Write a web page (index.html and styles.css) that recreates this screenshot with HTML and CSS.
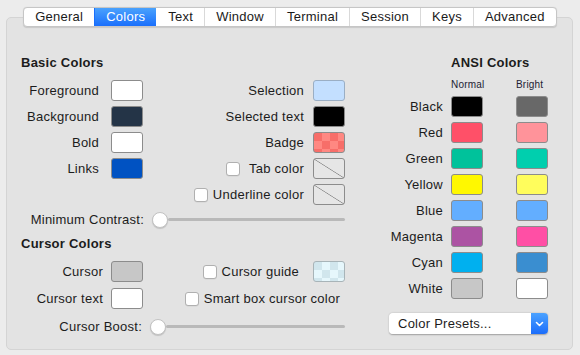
FILE: index.html
```html
<!DOCTYPE html>
<html lang="en">
<head>
    <meta charset="UTF-8">
    <title>Profiles - Colors</title>
    <link rel="stylesheet" href="styles.css">
</head>
<body>
    <div class="window">
        <div class="tabs">
            <span class="tab">General</span>
            <span class="tab active">Colors</span>
            <span class="tab">Text</span>
            <span class="tab">Window</span>
            <span class="tab">Terminal</span>
            <span class="tab">Session</span>
            <span class="tab">Keys</span>
            <span class="tab">Advanced</span>
        </div>

        <div class="panel">
            <div class="main">
                <h3 class="heading">Basic Colors</h3>
                <div class="basic">
                    <div class="col col-left">
                        <div class="row"><span>Foreground</span><span class="swatch c-white"></span></div>
                        <div class="row"><span>Background</span><span class="swatch c-bg"></span></div>
                        <div class="row"><span>Bold</span><span class="swatch c-white"></span></div>
                        <div class="row"><span>Links</span><span class="swatch c-links"></span></div>
                    </div>
                    <div class="col col-right">
                        <div class="row"><span>Selection</span><span class="swatch c-selection"></span></div>
                        <div class="row"><span>Selected text</span><span class="swatch c-black"></span></div>
                        <div class="row"><span>Badge</span><span class="swatch c-badge"></span></div>
                        <div class="row"><span class="checkbox"></span><span>Tab color</span><span class="swatch none"></span></div>
                        <div class="row"><span class="checkbox tight"></span><span>Underline color</span><span class="swatch none"></span></div>
                    </div>
                </div>

                <div class="slider-row">
                    <span class="slider-label">Minimum Contrast:</span>
                    <div class="slider"><span class="knob"></span><span class="track"></span></div>
                </div>

                <h3 class="heading heading-cursor">Cursor Colors</h3>
                <div class="cursor">
                    <div class="col col-left narrow">
                        <div class="row"><span>Cursor</span><span class="swatch c-cursor"></span></div>
                        <div class="row"><span>Cursor text</span><span class="swatch c-white"></span></div>
                    </div>
                    <div class="col col-right">
                        <div class="row guide"><span class="checkbox"></span><span>Cursor guide</span><span class="swatch c-guide"></span></div>
                        <div class="row smart"><span class="checkbox"></span><span>Smart box cursor color</span></div>
                    </div>
                </div>

                <div class="slider-row boost">
                    <span class="slider-label">Cursor Boost:</span>
                    <div class="slider"><span class="knob"></span><span class="track"></span></div>
                </div>
            </div>

            <div class="ansi">
                <h3 class="heading ansi-title">ANSI Colors</h3>
                <div class="ansi-head">
                    <span></span><span>Normal</span><span>Bright</span>
                </div>
                <div class="ansi-grid">
                    <span class="ansi-label">Black</span><span class="swatch c-black"></span><span class="swatch c-black-b"></span>
                    <span class="ansi-label">Red</span><span class="swatch c-red"></span><span class="swatch c-red-b"></span>
                    <span class="ansi-label">Green</span><span class="swatch c-green"></span><span class="swatch c-green-b"></span>
                    <span class="ansi-label">Yellow</span><span class="swatch c-yellow"></span><span class="swatch c-yellow-b"></span>
                    <span class="ansi-label">Blue</span><span class="swatch c-blue"></span><span class="swatch c-blue"></span>
                    <span class="ansi-label">Magenta</span><span class="swatch c-magenta"></span><span class="swatch c-magenta-b"></span>
                    <span class="ansi-label">Cyan</span><span class="swatch c-cyan"></span><span class="swatch c-cyan-b"></span>
                    <span class="ansi-label">White</span><span class="swatch c-cursor"></span><span class="swatch c-white"></span>
                </div>
                <div class="popup">
                    <span class="popup-text">Color Presets...</span>
                    <span class="popup-arrow">
                        <svg width="9" height="6" viewBox="0 0 9 6"><path d="M1.5 1.5 L4.5 4.5 L7.5 1.5" fill="none" stroke="#fff" stroke-width="1.6" stroke-linecap="round" stroke-linejoin="round"/></svg>
                    </span>
                </div>
            </div>
        </div>
    </div>
</body>
</html>
```

FILE: styles.css
```css
body {
    margin: 0;
    background: #ececec;
    font-family: 'Liberation Sans', Arial, sans-serif;
    font-size: 13px;
    letter-spacing: 0.25px;
    color: #1c1c1c;
}

.window {
    width: 580px;
    height: 355px;
    padding-top: 7px;
    box-sizing: border-box;
}

/* segmented tab control */
.tabs {
    position: relative;
    z-index: 1;
    display: flex;
    width: fit-content;
    margin: 0 auto;
    height: 20px;
    box-sizing: border-box;
    background: #fff;
    border: 1px solid #c6c6c6;
    border-radius: 4px;
    box-shadow: 0 0.5px 1px rgba(0, 0, 0, 0.12);
    overflow: hidden;
}

.tab {
    padding: 0 11px;
    line-height: 18px;
    color: #1a1a1a;
    border-left: 1px solid #d9d9d9;
}

.tab:first-child {
    border-left: none;
}

.tab.active {
    color: #fff;
    background: linear-gradient(#4aa2fd, #1a6ffc);
    border-left-color: #1a6ffc;
}

.tab.active + .tab {
    border-left-color: transparent;
}

.panel {
    display: flex;
    margin: -10px 7px 0 6px;
    height: 333px;
    box-sizing: border-box;
    padding: 37px 0 0 14px;
    background: #e3e3e3;
    border: 1px solid #d4d4d4;
    border-radius: 5px;
}

.main {
    width: 324px;
}

.heading {
    margin: 0;
    font-size: 13px;
    line-height: 16px;
    font-weight: bold;
}

.basic,
.cursor {
    display: flex;
    justify-content: space-between;
    margin-top: 9px;
}

.col {
    display: flex;
    flex-direction: column;
    gap: 5px;
}

.col-left {
    width: 122px;
}

.row {
    display: flex;
    align-items: center;
    justify-content: flex-end;
    height: 21px;
    gap: 12px;
    white-space: nowrap;
}

.col-left.narrow .row {
    gap: 8px;
}

.col-right .row {
    gap: 9px;
}

.cursor .col {
    gap: 6px;
}

.col-right .guide {
    gap: 5px;
}

.guide .swatch {
    margin-left: 9px;
}

.col-right .smart {
    gap: 5px;
    padding-right: 5px;
}

.checkbox {
    width: 14px;
    height: 14px;
    box-sizing: border-box;
    background: #fff;
    border: 1px solid #b0b0b0;
    border-radius: 3px;
    box-shadow: 0 0.5px 0.5px rgba(0, 0, 0, 0.08);
}

.checkbox.tight {
    margin-right: -4px;
}

.swatch {
    display: block;
    width: 32px;
    height: 21px;
    box-sizing: border-box;
    border: 1px solid #8c8c8c;
    border-radius: 3px;
    flex-shrink: 0;
}

.swatch.none {
    background: linear-gradient(to top right, transparent calc(50% - 0.7px), #8c8c8c 50%, transparent calc(50% + 0.7px)), #e6e6e6;
}

.c-white { background: #fff; }
.c-black { background: #000; }
.c-bg { background: #243447; }
.c-links { background: #0052c2; }
.c-selection { background: #c3dfff; border-color: #9aaec4; }
.c-cursor { background: #c7c7c7; }
.c-badge {
    background: repeating-conic-gradient(#ff8882 0 25%, #f76e69 0 50%) 0 0 / 16px 16px;
}
.c-guide {
    background: repeating-conic-gradient(#e6f7fc 0 25%, #d1e6ed 0 50%) 0 0 / 16px 16px;
    border-color: #a8b4b8;
}
.c-black-b { background: #686868; }
.c-red { background: #ff5068; }
.c-red-b { background: #ff939a; }
.c-green { background: #00c29b; }
.c-green-b { background: #00cfae; }
.c-yellow { background: #fff800; }
.c-yellow-b { background: #fffd5c; }
.c-blue { background: #63aeff; }
.c-magenta { background: #ac53a3; }
.c-magenta-b { background: #ff4fa5; }
.c-cyan { background: #00b0ef; }
.c-cyan-b { background: #3a8ed0; }

.slider-row {
    display: flex;
    align-items: center;
    height: 21px;
    margin-top: 4px;
}

.slider-row.boost {
    margin-top: 7px;
}

.slider-label {
    width: 123px;
    margin-right: 8px;
    text-align: right;
    white-space: nowrap;
}

.boost .slider-label {
    width: 121px;
}

.slider {
    flex: 1;
    display: flex;
    align-items: center;
}

.knob {
    width: 16px;
    height: 16px;
    box-sizing: border-box;
    border-radius: 50%;
    background: #fff;
    border: 1px solid #c2c2c2;
    box-shadow: 0 1px 1px rgba(0, 0, 0, 0.15);
}

.track {
    flex: 1;
    height: 3px;
    border-radius: 2px;
    background: #b9b9b9;
}

.heading-cursor {
    margin-top: 6px;
}

/* ANSI column */
.ansi {
    width: 159px;
    margin-left: 44px;
}

.ansi-title {
    margin-left: 62px;
}

.ansi-head,
.ansi-grid {
    display: grid;
    grid-template-columns: 54px 57px 32px;
    column-gap: 8px;
}

.ansi-head {
    margin-top: 8px;
    font-size: 10px;
    line-height: 12px;
    letter-spacing: 0.2px;
    color: #222233;
}

.ansi-grid {
    margin-top: 5px;
    row-gap: 5px;
    align-items: center;
}

.ansi-label {
    text-align: right;
}

.popup {
    display: flex;
    height: 21px;
    margin-top: 14px;
    box-sizing: border-box;
    border-radius: 4px;
    box-shadow: 0 0.5px 1.5px rgba(0, 0, 0, 0.3);
    overflow: hidden;
}

.popup-text {
    flex: 1;
    padding-left: 9px;
    line-height: 21px;
    background: #fff;
}

.popup-arrow {
    width: 17px;
    display: flex;
    align-items: center;
    justify-content: center;
    background: linear-gradient(#4ba2ff, #1b6dfb);
}
```
